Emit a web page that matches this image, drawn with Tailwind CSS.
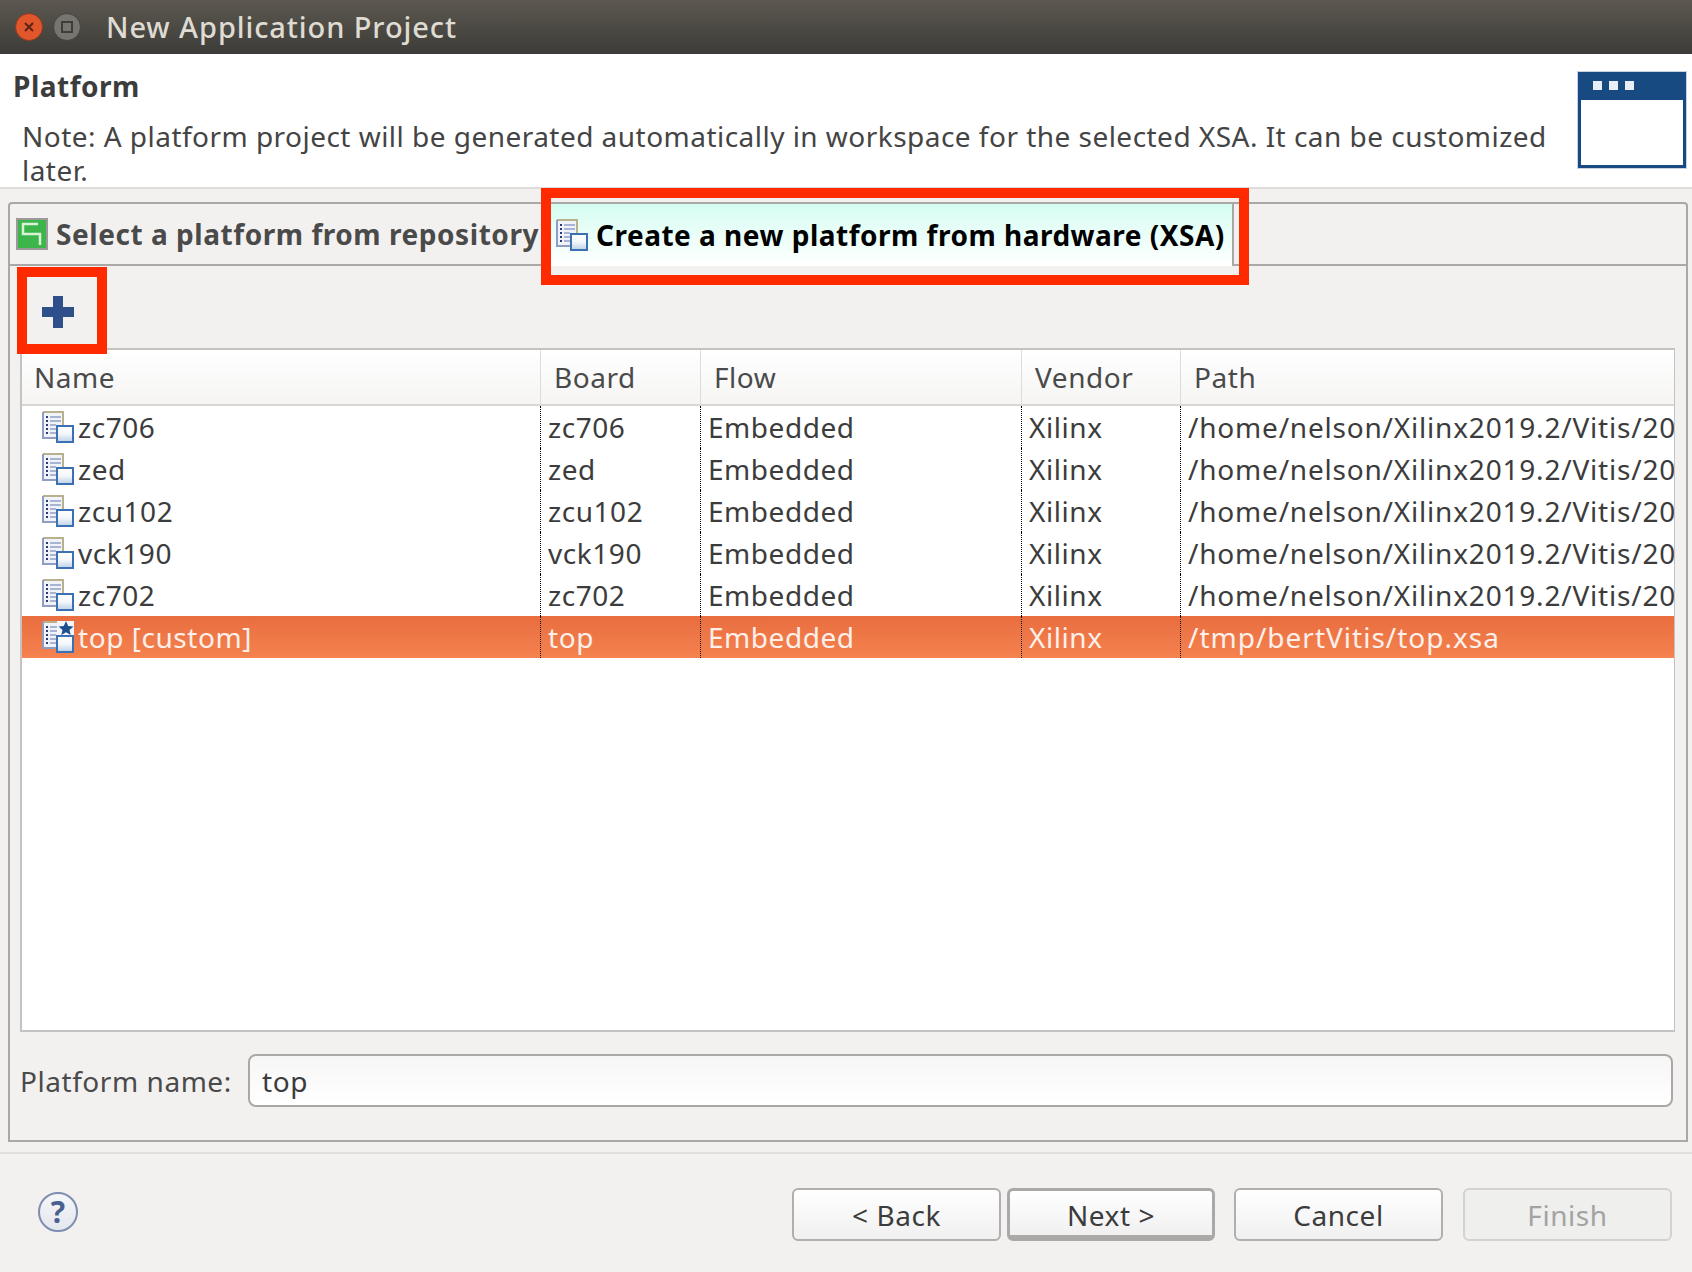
<!DOCTYPE html>
<html lang="en">
<head>
  <meta charset="UTF-8" />
  <title>New Application Project</title>
  <script src="https://cdn.jsdelivr.net/npm/@tailwindcss/browser@4"></script>
</head>
<body class="bg-[#f2f1f0] text-[#3c3c3c] font-['Noto_Sans',sans-serif] text-[28px] tracking-[0.55px] leading-[34px] h-[1272px] w-[1692px] overflow-hidden relative">

<svg class="absolute w-0 h-0">
  <defs>
    <linearGradient id="sq" x1="0" y1="0" x2="0" y2="1"><stop offset="0" stop-color="#ffffff"/><stop offset="0.5" stop-color="#f4f7fb"/><stop offset="1" stop-color="#bcd0e8"/></linearGradient>
    <symbol id="hw" viewBox="0 0 32 32">
      <path d="M1 1h20v26H1z" fill="#f1f3fa"/>
      <path d="M1 1h20v14" fill="none" stroke="#b9b18c" stroke-width="2"/>
      <path d="M1 1v26h14" fill="none" stroke="#8f9dc2" stroke-width="2"/>
      <path d="M4 6h2M4 10h2M4 14h2M4 18h2M4 22h2" stroke="#2a3a78" stroke-width="2"/>
      <path d="M8 6h11M8 10h11M8 14h6M8 18h6M8 22h6" stroke="#a9b3d4" stroke-width="2"/>
      <rect x="15" y="15" width="16" height="16" fill="url(#sq)" stroke="#3b70b5" stroke-width="2"/>
    </symbol>
  </defs>
</svg>

<!-- title bar -->
<div class="h-[54px] bg-gradient-to-b from-[#5c5850] to-[#3d3c38] flex items-center">
  <div class="ml-[15px] w-[28px] h-[28px] rounded-full bg-[#e2562c] border border-[#8d3a20] flex items-center justify-center text-[#5a2414]">
    <svg width="12" height="12" viewBox="0 0 12 12"><path d="M2 2l8 8M10 2l-8 8" stroke="currentColor" stroke-width="2"/></svg>
  </div>
  <div class="ml-[10px] w-[28px] h-[28px] rounded-full bg-[#77756f] border border-[#45433f] flex items-center justify-center">
    <div class="w-[12px] h-[12px] border-2 border-[#3e3d39]"></div>
  </div>
  <div class="ml-[25px] text-[#dfdbd2] font-medium text-[29px] tracking-[0.9px]">New Application Project</div>
</div>

<!-- header -->
<div class="h-[135px] bg-white border-b-[2px] border-[#dddcda] flex justify-between">
  <div class="pl-[13px]">
    <div class="font-bold text-[#3c3c3c] mt-[15px] tracking-[0.5px]">Platform</div>
    <div class="pl-[9px] mt-[16px] w-[1550px] text-[#444] tracking-[0.47px]">Note: A platform project will be generated automatically in workspace for the selected XSA. It can be customized later.</div>
  </div>
  <div class="mt-[18px] mr-[6px] w-[108px] h-[96px] border-[3px] border-[#164a80] shadow-[0_0_0_1px_#c5d3e2] flex flex-col">
    <div class="h-[25px] bg-[#164a80] flex items-center gap-[7px] pl-[12px] pb-[4px]">
      <div class="w-[9px] h-[9px] bg-[#e8eef5]"></div>
      <div class="w-[9px] h-[9px] bg-[#e8eef5]"></div>
      <div class="w-[9px] h-[9px] bg-[#e8eef5]"></div>
    </div>
  </div>
</div>

<!-- tab folder -->
<div class="mt-[13px] ml-[8px] mr-[4px] h-[940px] border-[2px] border-[#a9a8a6] rounded-t-[4px] flex flex-col">
  <div class="h-[62px] border-b-[2px] border-[#a9a8a6] flex items-center relative">
    <div class="flex items-center pl-[6px] w-[533px] h-full font-bold text-[#4a4a4a] whitespace-nowrap">
      <svg width="32" height="32" viewBox="0 0 32 32" class="shrink-0 mr-[8px]">
        <rect x="1" y="1" width="30" height="30" fill="#3cb54a" stroke="#9a9a9a" stroke-width="2"/>
        <path d="M22 6H7v10h17v11" fill="none" stroke="#d8f2d8" stroke-width="2.5"/>
      </svg>
      Select a platform from repository
    </div>
    <div class="absolute left-[541px] top-0 w-[683px] h-[62px] bg-gradient-to-b from-[#d5fdf2] to-white border-r-[2px] border-[#a9a8a6] flex items-center font-bold text-black whitespace-nowrap tracking-[0.5px]">
      <svg width="32" height="32" class="shrink-0 ml-[5px] mr-[8px]"><use href="#hw"/></svg>
      Create a new platform from hardware (XSA)
    </div>
  </div>

  <!-- toolbar -->
  <div class="h-[82px] flex items-center pl-[32px] pt-[10px]">
    <svg width="32" height="32" viewBox="0 0 32 32"><path d="M11 0h10v11h11v10H21v11H11V21H0V11h11z" fill="#2f4f8a"/></svg>
  </div>

  <!-- table -->
  <div class="ml-[10px] mr-[11px] h-[684px] bg-white border-[2px] border-[#c4c3c1] border-r-[1px]">
    <div class="h-[56px] grid grid-cols-[519px_160px_321px_159px_1fr] bg-gradient-to-b from-white to-[#f6f5f4] border-b-[2px] border-[#d8d7d5] text-[#4a4a4a] items-center">
      <div class="h-full flex items-center pl-[12px] border-r border-[#dddcda]">Name</div>
      <div class="h-full flex items-center pl-[13px] border-r border-[#dddcda]">Board</div>
      <div class="h-full flex items-center pl-[13px] border-r border-[#dddcda]">Flow</div>
      <div class="h-full flex items-center pl-[13px] border-r border-[#dddcda]">Vendor</div>
      <div class="h-full flex items-center pl-[13px]">Path</div>
    </div>

    <div class="h-[42px] grid grid-cols-[519px_160px_321px_159px_1fr] items-center">
      <div class="h-full flex items-center pl-[20px] border-r border-dotted border-black"><svg width="32" height="32" class="shrink-0 mr-[4px]"><use href="#hw"/></svg>zc706</div>
      <div class="h-full flex items-center pl-[7px] border-r border-dotted border-black">zc706</div>
      <div class="h-full flex items-center pl-[7px] border-r border-dotted border-black">Embedded</div>
      <div class="h-full flex items-center pl-[7px] border-r border-dotted border-black">Xilinx</div>
      <div class="h-full flex items-center pl-[7px] overflow-hidden whitespace-nowrap tracking-[0.8px]">/home/nelson/Xilinx2019.2/Vitis/20</div>
    </div>
    <div class="h-[42px] grid grid-cols-[519px_160px_321px_159px_1fr] items-center">
      <div class="h-full flex items-center pl-[20px] border-r border-dotted border-black"><svg width="32" height="32" class="shrink-0 mr-[4px]"><use href="#hw"/></svg>zed</div>
      <div class="h-full flex items-center pl-[7px] border-r border-dotted border-black">zed</div>
      <div class="h-full flex items-center pl-[7px] border-r border-dotted border-black">Embedded</div>
      <div class="h-full flex items-center pl-[7px] border-r border-dotted border-black">Xilinx</div>
      <div class="h-full flex items-center pl-[7px] overflow-hidden whitespace-nowrap tracking-[0.8px]">/home/nelson/Xilinx2019.2/Vitis/20</div>
    </div>
    <div class="h-[42px] grid grid-cols-[519px_160px_321px_159px_1fr] items-center">
      <div class="h-full flex items-center pl-[20px] border-r border-dotted border-black"><svg width="32" height="32" class="shrink-0 mr-[4px]"><use href="#hw"/></svg>zcu102</div>
      <div class="h-full flex items-center pl-[7px] border-r border-dotted border-black">zcu102</div>
      <div class="h-full flex items-center pl-[7px] border-r border-dotted border-black">Embedded</div>
      <div class="h-full flex items-center pl-[7px] border-r border-dotted border-black">Xilinx</div>
      <div class="h-full flex items-center pl-[7px] overflow-hidden whitespace-nowrap tracking-[0.8px]">/home/nelson/Xilinx2019.2/Vitis/20</div>
    </div>
    <div class="h-[42px] grid grid-cols-[519px_160px_321px_159px_1fr] items-center">
      <div class="h-full flex items-center pl-[20px] border-r border-dotted border-black"><svg width="32" height="32" class="shrink-0 mr-[4px]"><use href="#hw"/></svg>vck190</div>
      <div class="h-full flex items-center pl-[7px] border-r border-dotted border-black">vck190</div>
      <div class="h-full flex items-center pl-[7px] border-r border-dotted border-black">Embedded</div>
      <div class="h-full flex items-center pl-[7px] border-r border-dotted border-black">Xilinx</div>
      <div class="h-full flex items-center pl-[7px] overflow-hidden whitespace-nowrap tracking-[0.8px]">/home/nelson/Xilinx2019.2/Vitis/20</div>
    </div>
    <div class="h-[42px] grid grid-cols-[519px_160px_321px_159px_1fr] items-center">
      <div class="h-full flex items-center pl-[20px] border-r border-dotted border-black"><svg width="32" height="32" class="shrink-0 mr-[4px]"><use href="#hw"/></svg>zc702</div>
      <div class="h-full flex items-center pl-[7px] border-r border-dotted border-black">zc702</div>
      <div class="h-full flex items-center pl-[7px] border-r border-dotted border-black">Embedded</div>
      <div class="h-full flex items-center pl-[7px] border-r border-dotted border-black">Xilinx</div>
      <div class="h-full flex items-center pl-[7px] overflow-hidden whitespace-nowrap tracking-[0.8px]">/home/nelson/Xilinx2019.2/Vitis/20</div>
    </div>
    <div class="h-[42px] grid grid-cols-[519px_160px_321px_159px_1fr] items-center bg-gradient-to-b from-[#e96d3f] to-[#f5824f] text-[#fdf0ea]">
      <div class="h-full flex items-center pl-[20px] border-r border-dotted border-black">
        <svg width="32" height="32" viewBox="0 0 32 32" class="shrink-0 mr-[4px]">
          <use href="#hw"/>
          <rect x="15" y="0" width="17" height="14" fill="#f3f5fa"/>
          <path d="M24 0l2.2 5 5.3.4-4 3.5 1.2 5.2-4.7-2.8-4.7 2.8 1.2-5.2-4-3.5 5.3-.4z" fill="#1d4f8f"/>
        </svg>top [custom]</div>
      <div class="h-full flex items-center pl-[7px] border-r border-dotted border-black">top</div>
      <div class="h-full flex items-center pl-[7px] border-r border-dotted border-black">Embedded</div>
      <div class="h-full flex items-center pl-[7px] border-r border-dotted border-black">Xilinx</div>
      <div class="h-full flex items-center pl-[7px] overflow-hidden whitespace-nowrap tracking-[1px]">/tmp/bertVitis/top.xsa</div>
    </div>
  </div>

  <!-- platform name -->
  <div class="flex items-center mt-[22px] ml-[10px] mr-[13px] gap-[16px]">
    <div class="w-[212px] shrink-0 text-[#4a4a4a] whitespace-nowrap">Platform name:</div>
    <div class="flex-1 h-[53px] rounded-[8px] border-[2px] border-[#a9a8a6] bg-gradient-to-b from-[#f6f6f6] to-white flex items-center pl-[12px]">top</div>
  </div>
</div>

<!-- separator -->
<div class="mt-[10px] h-[2px] bg-[#e0dfdd]"></div>

<!-- buttons -->
<div class="flex items-center mt-[34px] pl-[792px] gap-[6px]">
  <div class="w-[209px] h-[53px] rounded-[6px] border-[2px] border-[#b0afad] bg-gradient-to-b from-white to-[#f0f0f0] flex items-center justify-center">&lt; Back</div>
  <div class="w-[208px] h-[53px] rounded-[6px] border-[3px] border-b-[6px] border-[#aaa9a7] bg-gradient-to-b from-white to-[#f0f0f0] flex items-center justify-center pt-[3px]">Next &gt;</div>
  <div class="ml-[13px] w-[209px] h-[53px] rounded-[6px] border-[2px] border-[#b0afad] bg-gradient-to-b from-white to-[#f0f0f0] flex items-center justify-center">Cancel</div>
  <div class="ml-[14px] w-[209px] h-[53px] rounded-[6px] border-[2px] border-[#d3d2d0] bg-[#efefee] text-[#a3a3a3] flex items-center justify-center">Finish</div>
</div>

<!-- help -->
<div class="absolute left-[38px] top-[1192px] w-[40px] h-[40px] rounded-full border-[2px] border-[#7d8eb0] bg-gradient-to-b from-[#f6f6f8] to-[#e4e7ee] flex items-center justify-center font-bold text-[#4a6190] text-[30px] leading-none tracking-normal">?</div>

<!-- red annotation boxes -->
<div class="absolute left-[541px] top-[188px] w-[708px] h-[97px] border-[10px] border-[#ff2a00]"></div>
<div class="absolute left-[17px] top-[267px] w-[90px] h-[87px] border-[10px] border-[#ff2a00]"></div>

</body>
</html>
